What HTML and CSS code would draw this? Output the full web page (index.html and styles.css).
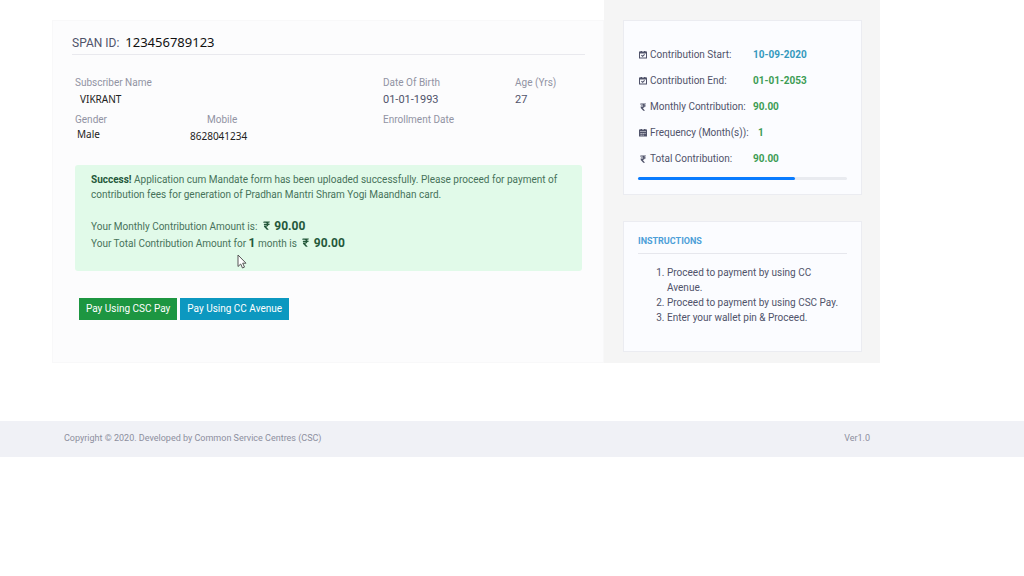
FILE: index.html
```html
<!DOCTYPE html>
<html lang="en">
<head>
<meta charset="utf-8">
<meta name="viewport" content="width=device-width, initial-scale=1">
<title>Contribution Payment</title>
<link rel="stylesheet" href="styles.css">
</head>
<body>
<svg class="defs" aria-hidden="true">
  <symbol id="cal-check" viewBox="0 0 16 16"><path fill-rule="evenodd" d="M0 1h3V0h3v1h4V0h3v1h3v14H0zM2 5v8h12V5zM4 9l1.500-1.500L7.300 9.200l3.200-3.200L12 7.500l-4.700 4.700z"/></symbol>
  <symbol id="cal-days" viewBox="0 0 16 16"><path fill-rule="evenodd" d="M0 1h3V0h3v1h4V0h3v1h3v14H0zM2 5v1h12V5zM3 8v1.500h2.500V8zM7 8v1.500h2.500V8zM11 8v1.500h2V8zM3 11.500V13h2.500v-1.500zM7 11.500V13h2.500v-1.500z"/></symbol>
  <symbol id="rupee" viewBox="0 0 16 16"><path d="M3 1h11l-1 2.200h-2.200q.6.800.8 1.600H14l-1 2.200h-1.500q-.7 2.600-4 3.100L12 15.500H8.600L3.500 10V8h2.600q2 0 2.600-1H3l1-2.200h4.600Q8 3.200 6 3.200H2z"/></symbol>
</svg>

<main class="page">
  <section class="details">
    <h1 class="span-id">SPAN ID: <span class="span-number">123456789123</span></h1>

    <dl class="fields">
      <div class="field field-name"><dt>Subscriber Name</dt><dd class="entered">VIKRANT</dd></div>
      <div class="field"><dt>Date Of Birth</dt><dd>01-01-1993</dd></div>
      <div class="field"><dt>Age (Yrs)</dt><dd>27</dd></div>
      <div class="field field-gender"><dt>Gender</dt><dd class="entered">Male</dd></div>
      <div class="field field-mobile"><dt>Mobile</dt><dd class="entered">8628041234</dd></div>
      <div class="field"><dt>Enrollment Date</dt><dd></dd></div>
    </dl>

    <div class="alert" role="status">
      <p class="alert-text"><strong>Success!</strong> Application cum Mandate form has been uploaded successfully. Please proceed for payment of contribution fees for generation of Pradhan Mantri Shram Yogi Maandhan card.</p>
      <p class="amount">Your Monthly Contribution Amount is: <svg class="icon"><use href="#rupee"/></svg> <strong>90.00</strong></p>
      <p class="amount">Your Total Contribution Amount for <strong>1</strong> month is <svg class="icon"><use href="#rupee"/></svg> <strong>90.00</strong></p>
      <svg class="cursor" viewBox="0 0 10 15" aria-hidden="true"><path d="M1 1v11.500l2.700-2.500 1.800 4 2-.9-1.800-3.900H9z"/></svg>
    </div>

    <div class="actions">
      <button class="btn btn-csc" type="button">Pay Using CSC Pay</button>
      <button class="btn btn-cc" type="button">Pay Using CC Avenue</button>
    </div>
  </section>

  <aside class="side">
    <section class="card summary">
      <dl class="rows">
        <div class="row"><dt><svg class="icon"><use href="#cal-check"/></svg>Contribution Start:</dt><dd class="start">10-09-2020</dd></div>
        <div class="row"><dt><svg class="icon"><use href="#cal-check"/></svg>Contribution End:</dt><dd>01-01-2053</dd></div>
        <div class="row"><dt><svg class="icon"><use href="#rupee"/></svg>Monthly Contribution:</dt><dd>90.00</dd></div>
        <div class="row"><dt><svg class="icon"><use href="#cal-days"/></svg>Frequency (Month(s)):</dt><dd class="count">1</dd></div>
        <div class="row"><dt><svg class="icon"><use href="#rupee"/></svg>Total Contribution:</dt><dd>90.00</dd></div>
      </dl>
      <div class="progress" role="progressbar" aria-label="Progress" aria-valuenow="75" aria-valuemin="0" aria-valuemax="100"><div class="bar" style="width:75%"></div></div>
    </section>
    <section class="card instructions">
      <h2 class="card-title">INSTRUCTIONS</h2>
      <ol class="steps">
        <li>Proceed to payment by using CC Avenue.</li>
        <li>Proceed to payment by using CSC Pay.</li>
        <li>Enter your wallet pin &amp; Proceed.</li>
      </ol>
    </section>
  </aside>
</main>

<footer class="footer">
  <span>Copyright © 2020. Developed by Common Service Centres (CSC)</span>
  <span>Ver1.0</span>
</footer>
</body>
</html>
```
FILE: styles.css
```css
* { box-sizing: border-box; }
body {
  margin: 0;
  background: #fff;
  color: #50536a;
  font: 10px/15px Roboto, sans-serif;
}
h1, h2, p, dl, dd, ol { margin: 0; }
.defs { display: none; }
.icon { width: 9px; height: 9px; fill: currentColor; }

.page {
  display: grid;
  grid-template-columns: 2fr 1fr;
  padding: 0 144px 0 52px;
}
.details {
  margin-top: 20px;
  padding: 12px 0 16px 19px;
  background: #fcfcfd;
  border: 1px solid #f8f8f9;
}
.span-id {
  margin-right: 18px;
  padding-bottom: 2px;
  border-bottom: 1px solid #e9e9ee;
  font-size: 12px;
  font-weight: 400;
  line-height: 18px;
}
.span-number {
  margin-left: 3px;
  color: #111;
  font: 13px/18px "Noto Sans", sans-serif;
}
.fields {
  display: grid;
  grid-template-columns: 3fr 4fr 3fr 2fr;
  margin: 20px 0 0 3px;
}
.field { height: 37px; }
.field-name { grid-column: span 2; }
.field dt { color: #9193a3; }
.field dd { font-size: 11px; line-height: 19px; }
.field .entered {
  padding-left: 5px;
  color: #222;
  font: 10px/18px "Noto Sans", sans-serif;
}
.field-gender .entered { padding-left: 2px; line-height: 15px; }
.field-mobile .entered { margin-left: -17px; padding: 0; line-height: 19px; }

.alert {
  position: relative;
  margin: 16px 21px 0 3px;
  padding: 7px 15px 19px 16px;
  border-radius: 3px;
  background: #e1fae9;
  color: #47725a;
}
.alert-text { margin-bottom: 16px; line-height: 15px; }
.alert strong { color: #25583b; }
.amount { line-height: 17px; }
.amount strong { font-size: 12px; }
.amount .icon { margin: 0 1px 0 2px; color: #25583b; vertical-align: 0; }
.cursor {
  position: absolute;
  left: 162px;
  top: 89px;
  width: 10px;
  height: 15px;
  fill: #fff;
  stroke: #555;
}
.actions { display: flex; gap: 3px; margin: 27px 0 26px 7px; }
.btn {
  height: 22px;
  padding: 0 7px;
  border: 0;
  color: #fff;
  font: 10px/22px Roboto, sans-serif;
}
.btn-csc { background: #1d9641; }
.btn-cc { background: #0c98c0; }

.side {
  display: flex;
  flex-direction: column;
  gap: 26px;
  padding: 20px 18px 11px 19px;
  background: #f5f5f5;
}
.card {
  padding: 21px 14px 19px;
  border: 1px solid #ebecf1;
  background: #fbfcff;
}
.row { display: flex; height: 26px; line-height: 26px; }
.row dt { flex: 0 0 115px; }
.row .icon { width: 8px; height: 8px; margin: 0 3px 0 1px; vertical-align: -1px; }
.row dd { color: #3d9c55; font-weight: 700; }
.row .start { color: #3599bd; }
.row .count { padding-left: 5px; }
.progress { height: 3px; margin: 5px 0 -5px; border-radius: 2px; background: #e9ebf0; }
.bar { height: 3px; border-radius: 2px; background: #0a7cff; }
.instructions { flex: 1; padding-top: 12px; }
.card-title {
  padding-bottom: 4px;
  border-bottom: 1px solid #e6e7ed;
  color: #4d9fd8;
  font-size: 9px;
  font-weight: 700;
  line-height: 15px;
}
.steps { padding: 11px 0 0 29px; line-height: 15px; }

.footer {
  display: flex;
  justify-content: space-between;
  margin-top: 58px;
  padding: 10px 154px 11px 64px;
  background: #f0f1f6;
  color: #8d8f9e;
  font-size: 9px;
}
```
